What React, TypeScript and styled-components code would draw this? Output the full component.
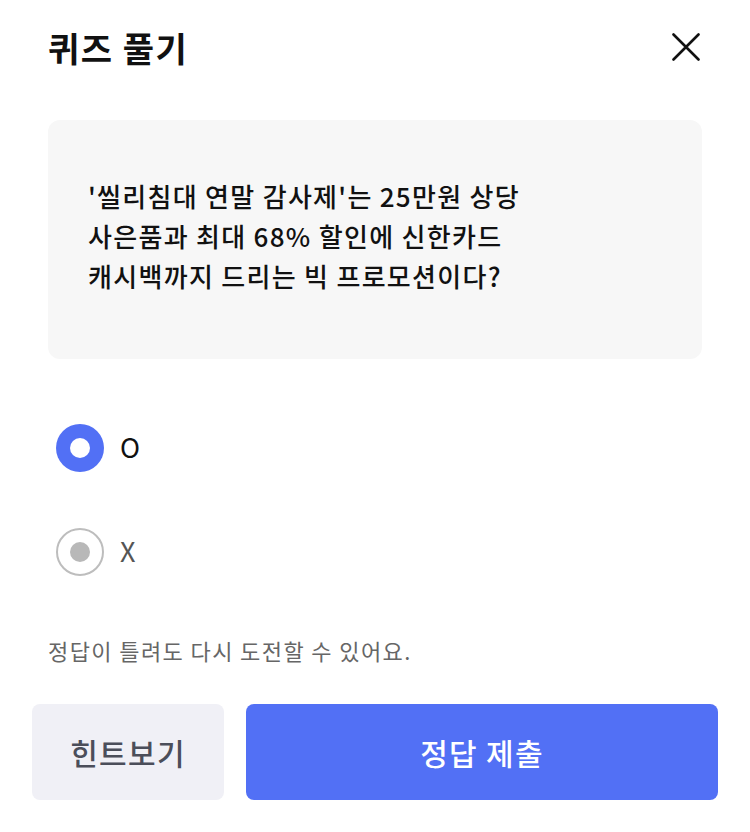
import React, { useState } from 'react'
import styled, { createGlobalStyle } from 'styled-components'

const GlobalStyle = createGlobalStyle`
  html, body {
    margin: 0;
    padding: 0;
    background: #ffffff;
  }
  body {
    font-family: "Noto Sans CJK KR", "Noto Sans", sans-serif;
    color: #111111;
  }
`

const options = ['O', 'X']

export default function App() {
  const [selected, setSelected] = useState('O')

  return (
    <>
      <GlobalStyle />
      <StyledModal>
        <StyledHeader>
          <StyledTitle>퀴즈 풀기</StyledTitle>
          <StyledCloseButton aria-label="닫기">
            <svg width="28" height="28" viewBox="0 0 28 28" fill="none">
              <path
                d="M1.5 1.5L26.5 26.5M26.5 1.5L1.5 26.5"
                stroke="#111111"
                strokeWidth="2.6"
                strokeLinecap="round"
              />
            </svg>
          </StyledCloseButton>
        </StyledHeader>

        <StyledQuestionCard>
          <StyledQuestion>
            '씰리침대 연말 감사제'는 25만원 상당
            <br />
            사은품과 최대 68% 할인에 신한카드
            <br />
            캐시백까지 드리는 빅 프로모션이다?
          </StyledQuestion>
        </StyledQuestionCard>

        <StyledOptionList>
          {options.map((option) => (
            <StyledOption key={option} onClick={() => setSelected(option)}>
              <StyledRadio $checked={selected === option} />
              <StyledOptionLabel $checked={selected === option}>{option}</StyledOptionLabel>
            </StyledOption>
          ))}
        </StyledOptionList>

        <StyledNotice>정답이 틀려도 다시 도전할 수 있어요.</StyledNotice>
      </StyledModal>

      <StyledButtonRow>
        <StyledHintButton>힌트보기</StyledHintButton>
        <StyledSubmitButton>정답 제출</StyledSubmitButton>
      </StyledButtonRow>
    </>
  )
}

const StyledModal = styled.div`
  padding: 0 48px;
`

const StyledHeader = styled.header`
  display: flex;
  align-items: center;
  justify-content: space-between;
  height: 94px;
`

const StyledTitle = styled.h1`
  margin: 0;
  font-size: 34px;
  font-weight: 700;
  letter-spacing: 1.5px;
  color: #111111;
`

const StyledCloseButton = styled.button`
  display: flex;
  align-items: center;
  justify-content: center;
  width: 28px;
  height: 28px;
  margin-right: 2px;
  padding: 0;
  border: none;
  background: none;
`

const StyledQuestionCard = styled.section`
  display: flex;
  align-items: center;
  height: 239px;
  margin-top: 26px;
  padding: 0 40px 8px;
  box-sizing: border-box;
  background: #f7f7f7;
  border-radius: 12px;
`

const StyledQuestion = styled.p`
  margin: 0;
  font-size: 26px;
  font-weight: 500;
  line-height: 40px;
  letter-spacing: 1.3px;
  color: #111111;
`

const StyledOptionList = styled.ul`
  display: flex;
  flex-direction: column;
  gap: 56px;
  margin: 65px 0 0;
  padding: 0 8px;
  list-style: none;
`

const StyledOption = styled.li`
  display: flex;
  align-items: center;
  gap: 16px;
  height: 48px;
  cursor: pointer;
`

const StyledRadio = styled.span<{ $checked: boolean }>`
  position: relative;
  width: 48px;
  height: 48px;
  box-sizing: border-box;
  border-radius: 50%;
  background: ${(p) => (p.$checked ? '#5270f5' : '#ffffff')};
  border: ${(p) => (p.$checked ? 'none' : '2px solid #bdbdbd')};

  &::after {
    content: '';
    position: absolute;
    top: 50%;
    left: 50%;
    width: 20px;
    height: 20px;
    border-radius: 50%;
    transform: translate(-50%, -50%);
    background: ${(p) => (p.$checked ? '#ffffff' : '#b8b8b8')};
  }
`

const StyledOptionLabel = styled.span<{ $checked: boolean }>`
  font-size: 27px;
  font-weight: 400;
  color: ${(p) => (p.$checked ? '#111111' : '#555555')};
  transform: translateY(-2px);
`

const StyledNotice = styled.p`
  margin: 59px 0 0;
  font-size: 22px;
  line-height: 30px;
  letter-spacing: 1.4px;
  color: #666666;
`

const StyledButtonRow = styled.div`
  display: flex;
  gap: 22px;
  margin-top: 39px;
  padding: 0 32px;
`

const StyledHintButton = styled.button`
  width: 192px;
  height: 96px;
  border: none;
  border-radius: 8px;
  background: #f0f0f6;
  font-family: inherit;
  font-size: 30px;
  font-weight: 500;
  letter-spacing: 1.3px;
  color: #4b4e5a;
`

const StyledSubmitButton = styled.button`
  flex: 1;
  height: 96px;
  border: none;
  border-radius: 8px;
  background: #5270f5;
  font-family: inherit;
  font-size: 30px;
  font-weight: 500;
  letter-spacing: 1.3px;
  color: #ffffff;
`
